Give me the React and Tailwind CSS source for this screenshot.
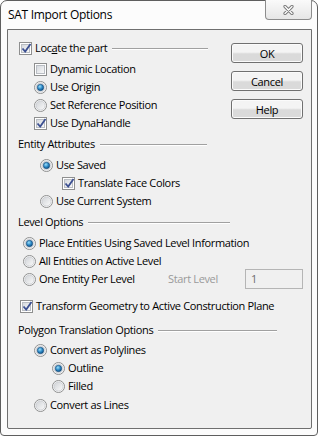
import React from 'react';

function CheckBox({ checked }) {
  return (
    <span className="relative block w-[13px] h-[13px] shrink-0 border border-[#8e8f8f] bg-white p-[1px]">
      <span className="block w-full h-full border border-[#b9bdc3] bg-linear-to-br from-[#d5d9de] to-[#f8f8f8]" />
      {checked && (
        <svg className="absolute left-[1px] top-[0px]" width="11" height="11" viewBox="0 0 11 11">
          <path d="M1.5 5.5 L4.2 8.5 L9.5 1" fill="none" stroke="#3b4f91" strokeWidth="1.8" />
        </svg>
      )}
    </span>
  );
}

function Radio({ checked }) {
  return (
    <svg className="block shrink-0" width="13" height="13" viewBox="0 0 13 13">
      <defs>
        <linearGradient id="rbg" x1="0" y1="0" x2="1" y2="1">
          <stop offset="0" stopColor="#cfd2d6" />
          <stop offset="1" stopColor="#fbfbfb" />
        </linearGradient>
        <radialGradient id="rdot" cx="0.4" cy="0.35" r="0.7">
          <stop offset="0" stopColor="#9be0fb" />
          <stop offset="0.55" stopColor="#2a86c4" />
          <stop offset="1" stopColor="#0c4a7e" />
        </radialGradient>
      </defs>
      <circle cx="6.5" cy="6.5" r="6" fill="#ffffff" stroke="#8e8f8f" strokeWidth="1" />
      <circle cx="6.5" cy="6.5" r="4.6" fill="url(#rbg)" stroke="#c4c7cb" strokeWidth="0.8" />
      {checked && <circle cx="6.5" cy="6.5" r="3.2" fill="url(#rdot)" stroke="#1a4c78" strokeWidth="0.6" />}
    </svg>
  );
}

function Option({ type, checked, label, className = '' }) {
  return (
    <div className={'flex items-center h-[18px] ' + className}>
      {type === 'radio' ? <Radio checked={checked} /> : <CheckBox checked={checked} />}
      <span className="ml-[3px] whitespace-nowrap">{label}</span>
    </div>
  );
}

function Header({ label, width, className = '' }) {
  return (
    <div className={'flex items-center h-[18px] ' + width + ' ' + className}>
      <span className="whitespace-nowrap">{label}</span>
      <div className="flex-1 ml-[5px] mt-[1px] border-t border-[#a0a0a0] border-b border-b-white" />
    </div>
  );
}

function Btn({ children }) {
  return (
    <button className="w-[72px] h-[20px] border border-[#707070] rounded-[3px] bg-linear-to-b from-[#f4f4f4] from-45% to-[#dadada] to-55% shadow-[inset_0_0_0_1px_#fbfbfb] text-black leading-none tracking-[-0.35px]">
      {children}
    </button>
  );
}

export default function App() {
  return (
    <div className="w-[318px] h-[436px] bg-white text-[11px] tracking-[-0.35px] text-black font-['Open_Sans',sans-serif]">
      <div className="w-[318px] h-[436px] border border-[#5e5e5e] rounded-t-[7px] rounded-b-[4px] bg-[#fcfcfc] flex flex-col pl-[6px] pr-[5px] pb-[6px]">
        {/* title bar */}
        <div className="h-[28px] flex justify-between shrink-0">
          <span className="pl-[1px] pt-[5px] text-[12px] leading-[18px] tracking-[-0.3px]">SAT Import Options</span>
          <div className="-mt-[1px] w-[47px] h-[20px] border border-t-0 border-[#8c8c8c] rounded-b-[4px] bg-linear-to-b from-[#fafafa] to-[#e6e6e6] flex items-center justify-center">
            <svg width="11" height="10" viewBox="0 0 11 10">
              <path d="M2 1.5 L9 8.5 M9 1.5 L2 8.5" stroke="#7a7a7a" strokeWidth="3.2" strokeLinecap="round" />
              <path d="M2 1.5 L9 8.5 M9 1.5 L2 8.5" stroke="#ffffff" strokeWidth="1.3" strokeLinecap="round" />
            </svg>
          </div>
        </div>

        {/* client */}
        <div className="flex-1 border border-[#6f6f6f] rounded-b-[2px] bg-[#f0f0f0] flex flex-col pl-[10px]">
          <div className="flex h-[102px]">
            <div className="flex-1 flex flex-col pt-[9px]">
              <div className="flex items-center h-[18px] w-[189px] ml-[1px]">
                <CheckBox checked />
                <span className="ml-[3px] whitespace-nowrap">Loc<span className="underline">a</span>te the part</span>
                <div className="flex-1 ml-[5px] mt-[1px] border-t border-[#a0a0a0] border-b border-b-white" />
              </div>
              <Option type="check" label="Dynamic Location" className="ml-[16px] mt-[3px]" />
              <Option type="radio" checked label="Use Origin" className="ml-[16px]" />
              <Option type="radio" label="Set Reference Position" className="ml-[16px]" />
              <Option type="check" checked label="Use DynaHandle" className="ml-[16px]" />
            </div>
            <div className="flex flex-col gap-[8px] pt-[13px] mr-[8px]">
              <Btn>OK</Btn>
              <Btn>Cancel</Btn>
              <Btn>Help</Btn>
            </div>
          </div>

          <Header label="Entity Attributes" width="w-[189px]" className="mt-[3px]" />
          <Option type="radio" checked label="Use Saved" className="ml-[22px] mt-[3px]" />
          <Option type="check" checked label="Translate Face Colors" className="ml-[44px]" />
          <Option type="radio" label="Use Current System" className="ml-[22px]" />

          <Header label="Level Options" width="w-[212px]" className="mt-[3px]" />
          <Option type="radio" checked label="Place Entities Using Saved Level Information" className="ml-[5px] mt-[3px]" />
          <Option type="radio" label="All Entities on Active Level" className="ml-[5px]" />
          <div className="flex items-center h-[18px] ml-[5px]">
            <div className="w-[145px] flex items-center">
              <Radio />
              <span className="ml-[3px] whitespace-nowrap">One Entity Per Level</span>
            </div>
            <span className="w-[77px] text-[#9a9a9a] whitespace-nowrap">Start Level</span>
            <div className="w-[58px] h-[20px] shrink-0 border border-[#b5b5b5] bg-[#f0f0f0] pl-[5px] flex items-center text-[#6d6d6d]">1</div>
          </div>
          <Option type="check" checked label="Transform Geometry to Active Construction Plane" className="ml-[2px] mt-[9px]" />

          <Header label="Polygon Translation Options" width="w-[259px]" className="mt-[6px]" />
          <Option type="radio" checked label="Convert as Polylines" className="ml-[16px] mt-[2px]" />
          <Option type="radio" checked label="Outline" className="ml-[34px]" />
          <Option type="radio" label="Filled" className="ml-[34px]" />
          <Option type="radio" label="Convert as Lines" className="ml-[16px] mt-[1px]" />
        </div>
      </div>
    </div>
  );
}
